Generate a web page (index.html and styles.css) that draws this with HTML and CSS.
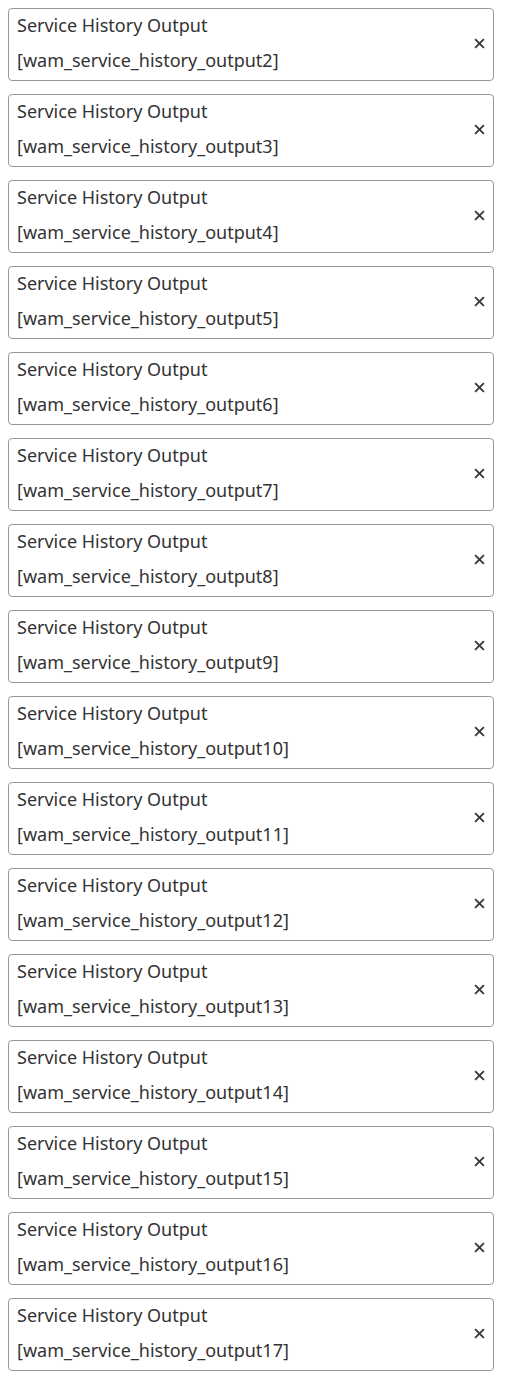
FILE: index.html
```html
<!DOCTYPE html>
<html lang="en">
<head>
<meta charset="UTF-8">
<meta name="viewport" content="width=device-width, initial-scale=1.0">
<title>Service History Outputs</title>
<link rel="stylesheet" href="styles.css">
</head>
<body>
<ul class="chip-list">
  <li class="chip"><div class="chip-text"><div>Service History Output</div><div>[wam_service_history_output2]</div></div><svg class="chip-close" viewBox="0 0 10 10"><path d="M1 1L9 9M9 1L1 9"/></svg></li>
  <li class="chip"><div class="chip-text"><div>Service History Output</div><div>[wam_service_history_output3]</div></div><svg class="chip-close" viewBox="0 0 10 10"><path d="M1 1L9 9M9 1L1 9"/></svg></li>
  <li class="chip"><div class="chip-text"><div>Service History Output</div><div>[wam_service_history_output4]</div></div><svg class="chip-close" viewBox="0 0 10 10"><path d="M1 1L9 9M9 1L1 9"/></svg></li>
  <li class="chip"><div class="chip-text"><div>Service History Output</div><div>[wam_service_history_output5]</div></div><svg class="chip-close" viewBox="0 0 10 10"><path d="M1 1L9 9M9 1L1 9"/></svg></li>
  <li class="chip"><div class="chip-text"><div>Service History Output</div><div>[wam_service_history_output6]</div></div><svg class="chip-close" viewBox="0 0 10 10"><path d="M1 1L9 9M9 1L1 9"/></svg></li>
  <li class="chip"><div class="chip-text"><div>Service History Output</div><div>[wam_service_history_output7]</div></div><svg class="chip-close" viewBox="0 0 10 10"><path d="M1 1L9 9M9 1L1 9"/></svg></li>
  <li class="chip"><div class="chip-text"><div>Service History Output</div><div>[wam_service_history_output8]</div></div><svg class="chip-close" viewBox="0 0 10 10"><path d="M1 1L9 9M9 1L1 9"/></svg></li>
  <li class="chip"><div class="chip-text"><div>Service History Output</div><div>[wam_service_history_output9]</div></div><svg class="chip-close" viewBox="0 0 10 10"><path d="M1 1L9 9M9 1L1 9"/></svg></li>
  <li class="chip"><div class="chip-text"><div>Service History Output</div><div>[wam_service_history_output10]</div></div><svg class="chip-close" viewBox="0 0 10 10"><path d="M1 1L9 9M9 1L1 9"/></svg></li>
  <li class="chip"><div class="chip-text"><div>Service History Output</div><div>[wam_service_history_output11]</div></div><svg class="chip-close" viewBox="0 0 10 10"><path d="M1 1L9 9M9 1L1 9"/></svg></li>
  <li class="chip"><div class="chip-text"><div>Service History Output</div><div>[wam_service_history_output12]</div></div><svg class="chip-close" viewBox="0 0 10 10"><path d="M1 1L9 9M9 1L1 9"/></svg></li>
  <li class="chip"><div class="chip-text"><div>Service History Output</div><div>[wam_service_history_output13]</div></div><svg class="chip-close" viewBox="0 0 10 10"><path d="M1 1L9 9M9 1L1 9"/></svg></li>
  <li class="chip"><div class="chip-text"><div>Service History Output</div><div>[wam_service_history_output14]</div></div><svg class="chip-close" viewBox="0 0 10 10"><path d="M1 1L9 9M9 1L1 9"/></svg></li>
  <li class="chip"><div class="chip-text"><div>Service History Output</div><div>[wam_service_history_output15]</div></div><svg class="chip-close" viewBox="0 0 10 10"><path d="M1 1L9 9M9 1L1 9"/></svg></li>
  <li class="chip"><div class="chip-text"><div>Service History Output</div><div>[wam_service_history_output16]</div></div><svg class="chip-close" viewBox="0 0 10 10"><path d="M1 1L9 9M9 1L1 9"/></svg></li>
  <li class="chip"><div class="chip-text"><div>Service History Output</div><div>[wam_service_history_output17]</div></div><svg class="chip-close" viewBox="0 0 10 10"><path d="M1 1L9 9M9 1L1 9"/></svg></li>
</ul>
</body>
</html>
```

FILE: styles.css
```css
body {
  margin: 0;
  background-color: #fff;
  font-family: "Noto Sans", Arial, sans-serif;
  color: #333;
}
.chip-list {
  list-style-type: none;
  margin: 0;
  padding: 8px 11px 0 8px;
  display: flex;
  flex-direction: column;
  gap: 13px;
}
.chip {
  display: flex;
  align-items: center;
  justify-content: space-between;
  height: 71px;
  border: 1px solid #999;
  border-radius: 4px;
  padding: 0 8px 0 8px;
}
.chip-text {
  font-size: 18px;
  line-height: 35px;
  margin-top: -4px;
}
.chip-close {
  width: 11px;
  height: 11px;
  margin-top: -3px;
  stroke: #3d3d3d;
  stroke-width: 1.8;
  fill: none;
}
```
